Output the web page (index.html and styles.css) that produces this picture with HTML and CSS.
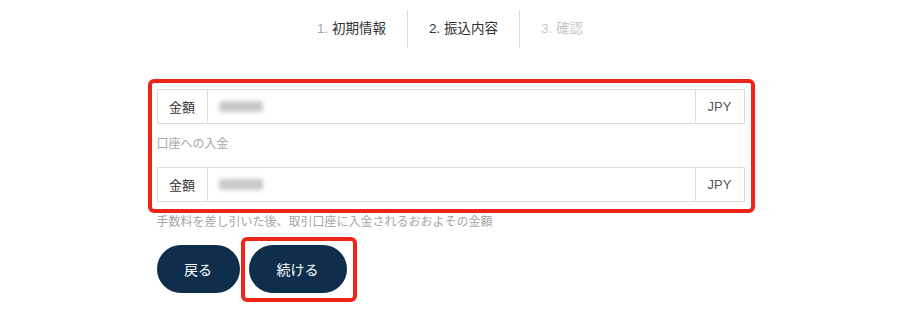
FILE: index.html
```html
<!DOCTYPE html>
<html lang="ja">
<head>
    <meta charset="UTF-8">
    <title>振込内容</title>
    <link rel="stylesheet" href="styles.css">
</head>
<body>
    <nav class="steps">
        <div class="step done"><span class="num">1.</span> 初期情報</div>
        <div class="step active">2. 振込内容</div>
        <div class="step todo">3. 確認</div>
    </nav>

    <div class="form">
        <div class="mark">
            <div class="input-group">
                <span class="addon label">金額</span>
                <span class="field"><span class="masked"></span></span>
                <span class="addon unit">JPY</span>
            </div>
            <p class="caption">口座への入金</p>
            <div class="input-group">
                <span class="addon label">金額</span>
                <span class="field"><span class="masked"></span></span>
                <span class="addon unit">JPY</span>
            </div>
        </div>
        <p class="hint">手数料を差し引いた後、取引口座に入金されるおおよその金額</p>

        <div class="actions">
            <button class="btn back">戻る</button>
            <div class="mark mark-btn">
                <button class="btn next">続ける</button>
            </div>
        </div>
    </div>
</body>
</html>
```

FILE: styles.css
```css
:root {
    --navy: #0f2e4b;
    --line: #dcdcdc;
    --text: #333333;
    --muted: #a6a6a6;
    --mark: #ee2418;
}

body {
    margin: 0;
    font-family: "Liberation Sans", "Noto Sans CJK JP", sans-serif;
    color: var(--text);
    background: #ffffff;
}

.steps {
    display: flex;
    justify-content: center;
    padding-top: 10px;
}

.step {
    height: 38px;
    line-height: 38px;
    padding: 0 21px;
    font-size: 13.5px;
}

.step + .step {
    border-left: 1px solid var(--line);
}

.step .num {
    color: var(--muted);
}

.step.todo {
    color: #c8c8c8;
}

.form {
    width: 588px;
    margin: 31px auto 0;
    padding-left: 1px;
}

.mark {
    border: 4px solid var(--mark);
    border-radius: 6px;
}

.form > .mark {
    margin: 0 -10px 0 -9px;
    padding: 6px 6px 7px 5px;
}

.input-group {
    display: flex;
    height: 35px;
    border: 1px solid var(--line);
    box-sizing: border-box;
}

.addon {
    display: flex;
    align-items: center;
    justify-content: center;
    font-size: 13px;
}

.label {
    width: 49px;
    border-right: 1px solid var(--line);
}

.unit {
    width: 48px;
    border-left: 1px solid var(--line);
    color: #555555;
}

.field {
    flex: 1;
    display: flex;
    align-items: center;
    padding-left: 11px;
}

.masked {
    width: 44px;
    height: 11px;
    background: #c9c9c9;
    border-radius: 3px;
    filter: blur(2px);
}

.caption {
    margin: 10px 0 13px;
    line-height: 20px;
    font-size: 12px;
    color: var(--muted);
}

.hint {
    margin: 0;
    line-height: 18px;
    font-size: 12px;
    color: var(--muted);
}

.actions {
    display: flex;
    align-items: flex-start;
    margin-top: 14px;
}

.btn {
    height: 48px;
    margin: 0;
    padding: 0;
    border: none;
    border-radius: 24px;
    background: var(--navy);
    color: #ffffff;
    font-family: inherit;
    font-size: 14px;
    cursor: pointer;
}

.back {
    width: 83px;
}

.next {
    width: 98px;
}

.mark-btn {
    display: flex;
    height: 48px;
    margin: -8px 0 0 1px;
    padding: 4px 6px 5px 4px;
}
```
